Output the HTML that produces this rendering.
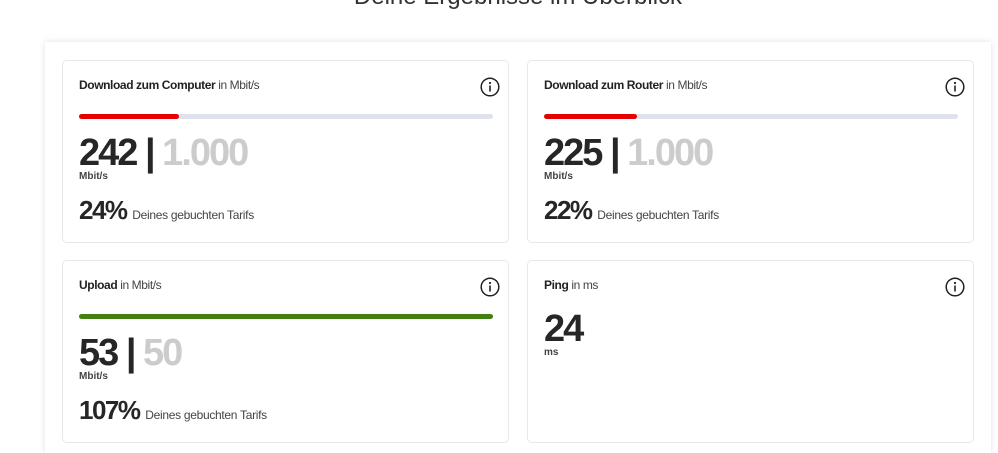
<!DOCTYPE html>
<html style="overflow:hidden;height:453px"><head><meta charset="utf-8"><style>
body{margin:0;width:998px;height:453px;overflow:hidden;background:#fff;font-family:"Liberation Sans",sans-serif;color:#333;position:relative}
.title{position:absolute;top:-17px;left:0;width:1036px;text-align:center;font-size:24px;color:#333;font-weight:300}
.outer{position:absolute;left:45px;top:42px;width:946px;height:411px;background:#fff;box-shadow:0 0 6px rgba(0,0,0,.12)}
.card{position:absolute;width:445px;height:181px;border:1px solid #e6e8ec;border-radius:5px;background:#fff}
.h{position:absolute;left:16px;top:17px;font-size:12px;letter-spacing:-0.4px}
.h b{font-weight:bold;color:#222}
.h span{color:#444}
.bar{position:absolute;left:16px;top:53px;width:414px;height:5px;border-radius:3px;background:#dfe2ec}
.bar i{display:block;height:5px;border-radius:3px}
.num{position:absolute;left:16px;top:69px;font-size:38px;font-weight:bold;letter-spacing:-2px;line-height:46px;color:#262626}
.num span{color:#ccc}
.unit{position:absolute;left:16px;top:110px;font-size:10px;font-weight:bold;color:#444}
.pct{position:absolute;left:16px;top:134px;font-size:26px;font-weight:bold;letter-spacing:-1.5px;color:#262626}
.pct span{font-size:12px;font-weight:normal;letter-spacing:-0.3px;color:#444}
.info{position:absolute;left:417px;top:16px}
</style></head><body>
<div class="title">Deine Ergebnisse im Überblick</div>
<div class="outer"></div>

<div class="card" style="left:62px;top:60px">
<div class="h"><b>Download zum Computer</b> <span>in Mbit/s</span></div>
<svg class="info" width="20" height="20" viewBox="0 0 20 20"><circle cx="10" cy="10" r="8.8" fill="none" stroke="#222" stroke-width="1.5"/><circle cx="10" cy="6" r="1.1" fill="#222"/><rect x="9.2" y="8.5" width="1.6" height="6" fill="#222"/></svg>
<div class="bar"><i style="width:100px;background:#e60000"></i></div>
<div class="num">242 | <span>1.000</span></div>
<div class="unit">Mbit/s</div>
<div class="pct">24% <span>Deines gebuchten Tarifs</span></div>
</div>

<div class="card" style="left:527px;top:60px">
<div class="h"><b>Download zum Router</b> <span>in Mbit/s</span></div>
<svg class="info" width="20" height="20" viewBox="0 0 20 20"><circle cx="10" cy="10" r="8.8" fill="none" stroke="#222" stroke-width="1.5"/><circle cx="10" cy="6" r="1.1" fill="#222"/><rect x="9.2" y="8.5" width="1.6" height="6" fill="#222"/></svg>
<div class="bar"><i style="width:93px;background:#e60000"></i></div>
<div class="num">225 | <span>1.000</span></div>
<div class="unit">Mbit/s</div>
<div class="pct">22% <span>Deines gebuchten Tarifs</span></div>
</div>

<div class="card" style="left:62px;top:260px">
<div class="h"><b>Upload</b> <span>in Mbit/s</span></div>
<svg class="info" width="20" height="20" viewBox="0 0 20 20"><circle cx="10" cy="10" r="8.8" fill="none" stroke="#222" stroke-width="1.5"/><circle cx="10" cy="6" r="1.1" fill="#222"/><rect x="9.2" y="8.5" width="1.6" height="6" fill="#222"/></svg>
<div class="bar"><i style="width:414px;background:#428012"></i></div>
<div class="num">53 | <span>50</span></div>
<div class="unit">Mbit/s</div>
<div class="pct">107% <span>Deines gebuchten Tarifs</span></div>
</div>

<div class="card" style="left:527px;top:260px">
<div class="h"><b>Ping</b> <span>in ms</span></div>
<svg class="info" width="20" height="20" viewBox="0 0 20 20"><circle cx="10" cy="10" r="8.8" fill="none" stroke="#222" stroke-width="1.5"/><circle cx="10" cy="6" r="1.1" fill="#222"/><rect x="9.2" y="8.5" width="1.6" height="6" fill="#222"/></svg>
<div class="num" style="top:45px">24</div>
<div class="unit" style="top:86px">ms</div>
</div>
</body></html>
